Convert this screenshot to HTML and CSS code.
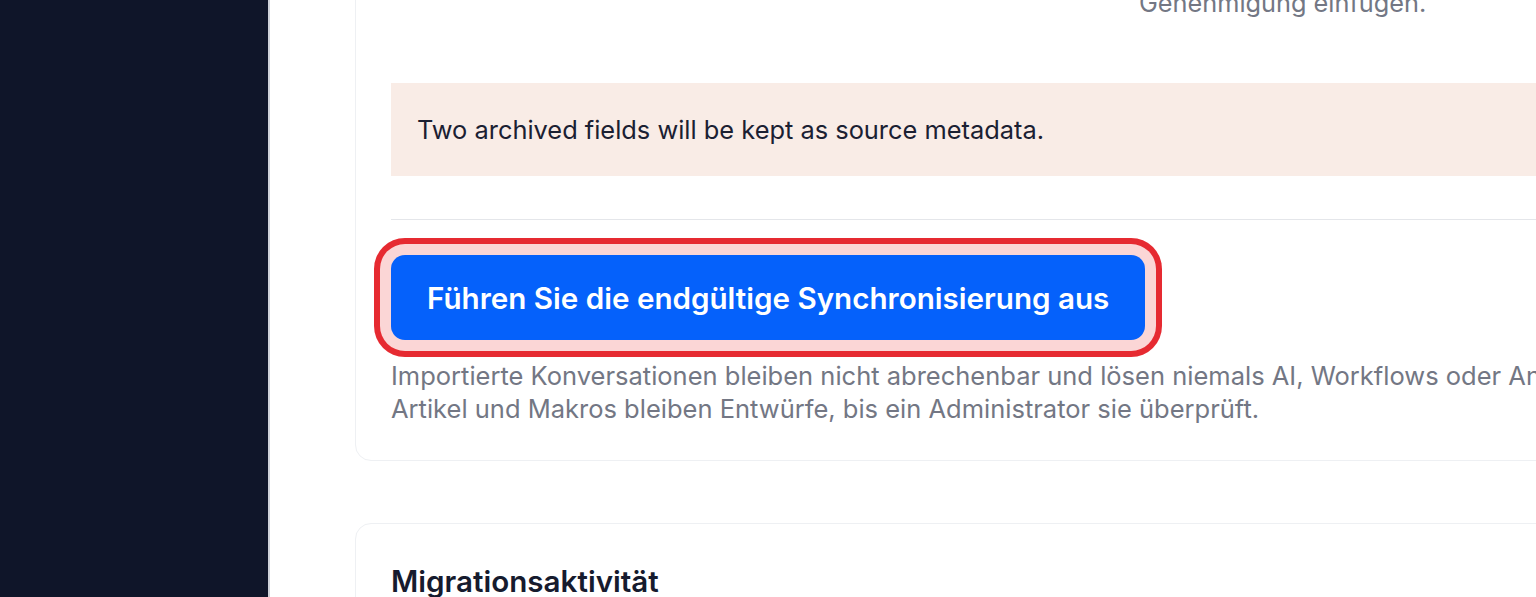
FILE: index.html
```html
<!DOCTYPE html>
<html lang="de">
<head>
<meta charset="utf-8">
<title>Migration</title>
<link rel="stylesheet" href="styles.css">
</head>
<body>
  <aside class="sidebar"></aside>
  <main class="main">
    <section class="card card-sync">
      <div class="field-row">
        <div class="field-label"></div>
        <p class="field-note">Genehmigung einfügen.</p>
      </div>
      <div class="notice">Two archived fields will be kept as source metadata.</div>
      <hr class="divider">
      <div class="action">
        <button class="btn-primary" type="button">Führen Sie die endgültige Synchronisierung aus</button>
      </div>
      <p class="help">Importierte Konversationen bleiben nicht abrechenbar und lösen niemals AI, Workflows oder Analytics-Ereignisse aus.<br>Artikel und Makros bleiben Entwürfe, bis ein Administrator sie überprüft.</p>
    </section>
    <section class="card card-activity">
      <h2 class="card-title">Migrationsaktivität</h2>
    </section>
  </main>
</body>
</html>
```

FILE: styles.css
```css
* { box-sizing: border-box; }
html, body { height: 100%; }
body {
  margin: 0;
  display: flex;
  overflow: hidden;
  background: #ffffff;
  font-family: Inter, "Noto Sans", "Liberation Sans", sans-serif;
  color: #1b2032;
}
.sidebar {
  flex: 0 0 270px;
  background: #0f1529;
  border-right: 2px solid #cfd2d9;
}
.main {
  flex: 1 0 auto;
  padding-left: 85px;
  min-width: 0;
}
.card {
  width: 1400px;
  background: #fff;
  border: 1.5px solid #eef0f3;
  border-radius: 16px;
  padding: 35px 35px 35px 35px;
}
.card-sync { margin-top: -50px; }
.field-row {
  display: grid;
  grid-template-columns: 748px 1fr;
}
.field-note {
  margin: 0;
  font-size: 25.3px;
  line-height: 33px;
  color: #737784;
}
.notice {
  margin-top: 64px;
  background: #f9ece6;
  padding: 30px 26px;
  font-size: 25.4px;
  line-height: 33px;
  color: #1b2032;
}
.divider {
  margin: 43px 0 0;
  border: 0;
  border-top: 1.5px solid #e4e6ea;
}
.action { margin-top: 35px; }
.btn-primary {
  height: 85px;
  padding: 0 36px;
  border: 0;
  border-radius: 14px;
  background: #0561fb;
  color: #fff;
  font-family: inherit;
  font-size: 29.6px;
  font-weight: 600;
  box-shadow: 0 0 0 11px #fbd6d6, 0 0 0 17px #e62a31;
}
.help {
  margin: 19px 0 0;
  font-size: 25.5px;
  line-height: 33px;
  color: #737784;
  white-space: nowrap;
}
.card-activity {
  margin-top: 62px;
  padding-top: 40px;
  height: 200px;
}
.card-title {
  margin: 0;
  font-size: 29.6px;
  line-height: 35px;
  font-weight: 600;
  color: #161b2e;
}
```
